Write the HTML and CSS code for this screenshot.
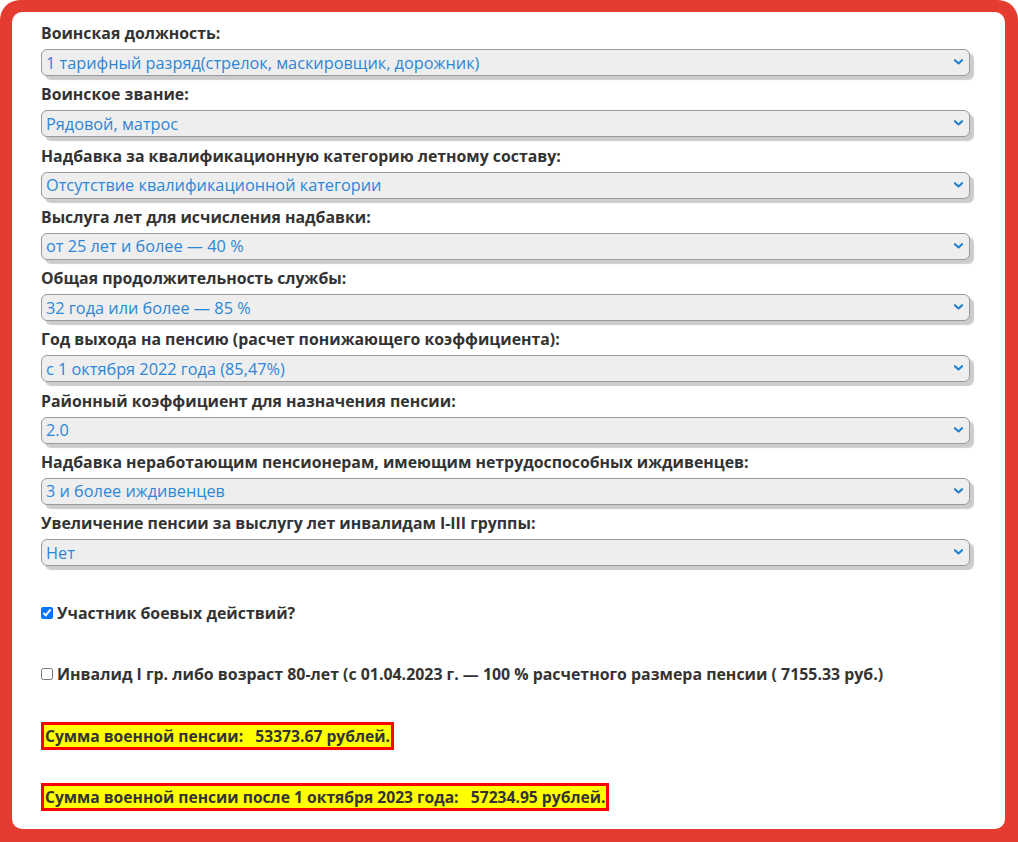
FILE: index.html
```html
<!DOCTYPE html>
<html lang="ru">
<head>
<meta charset="utf-8">
<title>Калькулятор военной пенсии</title>
<link rel="stylesheet" href="styles.css">
</head>
<body>
<div class="frame">
  <div class="card">
    <div class="field">
      <label class="lbl">Воинская должность:</label>
      <div class="sel"><select><option>1 тарифный разряд(стрелок, маскировщик, дорожник)</option></select><svg class="chev" viewBox="0 0 10 6"><path d="M1 1 L5 4.6 L9 1"/></svg></div>
    </div>
    <div class="field">
      <label class="lbl">Воинское звание:</label>
      <div class="sel"><select><option>Рядовой, матрос</option></select><svg class="chev" viewBox="0 0 10 6"><path d="M1 1 L5 4.6 L9 1"/></svg></div>
    </div>
    <div class="field">
      <label class="lbl">Надбавка за квалификационную категорию летному составу:</label>
      <div class="sel"><select><option>Отсутствие квалификационной категории</option></select><svg class="chev" viewBox="0 0 10 6"><path d="M1 1 L5 4.6 L9 1"/></svg></div>
    </div>
    <div class="field">
      <label class="lbl">Выслуга лет для исчисления надбавки:</label>
      <div class="sel"><select><option>от 25 лет и более — 40 %</option></select><svg class="chev" viewBox="0 0 10 6"><path d="M1 1 L5 4.6 L9 1"/></svg></div>
    </div>
    <div class="field">
      <label class="lbl">Общая продолжительность службы:</label>
      <div class="sel"><select><option>32 года или более — 85 %</option></select><svg class="chev" viewBox="0 0 10 6"><path d="M1 1 L5 4.6 L9 1"/></svg></div>
    </div>
    <div class="field">
      <label class="lbl">Год выхода на пенсию (расчет понижающего коэффициента):</label>
      <div class="sel"><select><option>с 1 октября 2022 года (85,47%)</option></select><svg class="chev" viewBox="0 0 10 6"><path d="M1 1 L5 4.6 L9 1"/></svg></div>
    </div>
    <div class="field">
      <label class="lbl">Районный коэффициент для назначения пенсии:</label>
      <div class="sel"><select><option>2.0</option></select><svg class="chev" viewBox="0 0 10 6"><path d="M1 1 L5 4.6 L9 1"/></svg></div>
    </div>
    <div class="field">
      <label class="lbl">Надбавка неработающим пенсионерам, имеющим нетрудоспособных иждивенцев:</label>
      <div class="sel"><select><option>3 и более иждивенцев</option></select><svg class="chev" viewBox="0 0 10 6"><path d="M1 1 L5 4.6 L9 1"/></svg></div>
    </div>
    <div class="field">
      <label class="lbl">Увеличение пенсии за выслугу лет инвалидам I-III группы:</label>
      <div class="sel"><select><option>Нет</option></select><svg class="chev" viewBox="0 0 10 6"><path d="M1 1 L5 4.6 L9 1"/></svg></div>
    </div>

    <label class="check first"><input type="checkbox" checked>Участник боевых действий?</label>
    <label class="check second"><input type="checkbox">Инвалид I гр. либо возраст 80-лет (с 01.04.2023 г. — 100 % расчетного размера пенсии ( 7155.33 руб.)</label>

    <div class="result r1">Сумма военной пенсии:&nbsp;&nbsp; 53373.67 рублей.</div>
    <div class="result r2">Сумма военной пенсии после 1 октября 2023 года:&nbsp;&nbsp; 57234.95 рублей.</div>
  </div>
</div>
</body>
</html>
```
FILE: styles.css
```css
html, body {
  margin: 0;
  padding: 0;
  background: #ffffff;
  overflow: hidden;
}
.frame {
  box-sizing: border-box;
  height: 842px;
  background: #e53c31;
  padding: 12px 13px 13px 12px;
  border-radius: 20px 20px 0 0;
}
.card {
  box-sizing: border-box;
  height: 100%;
  background: #ffffff;
  border-radius: 10px;
  padding: 11px 35px 0 29px;
  font-family: "Open Sans", "DejaVu Sans", sans-serif;
  color: #333333;
}
.field {
  margin-bottom: 8.25px;
}
.lbl {
  display: block;
  font-weight: 700;
  font-size: 15.85px;
  line-height: 20px;
  margin-bottom: 6px;
}
.sel {
  position: relative;
  height: 27px;
}
.sel select {
  -webkit-appearance: none;
  appearance: none;
  box-sizing: border-box;
  width: 100%;
  height: 27px;
  margin: 0;
  padding: 0 24px 0 4px;
  background: #eeeeee;
  border: 1px solid #9a9a9a;
  border-radius: 6px;
  box-shadow: 4px 4px 1px rgba(0, 0, 0, 0.2);
  font-family: "Open Sans", "DejaVu Sans", sans-serif;
  font-size: 16.3px;
  color: #2d86d6;
  outline: none;
}
.chev {
  position: absolute;
  right: 7px;
  top: 10px;
  width: 9px;
  height: 6px;
  fill: none;
  stroke: #1f7fd0;
  stroke-width: 2.4;
  stroke-linecap: round;
  stroke-linejoin: round;
  pointer-events: none;
}
.check {
  display: flex;
  align-items: center;
  font-weight: 700;
  font-size: 15.9px;
  line-height: 20px;
}
.check input {
  width: 12px;
  height: 12px;
  margin: 0 4px 0 0;
}
.check.first {
  margin-top: 37px;
}
.check.second {
  margin-top: 41px;
}
.result {
  display: table;
  background: #ffff00;
  border: 3px solid #ff0000;
  padding: 0 1px;
  font-weight: 700;
  font-size: 15.65px;
  line-height: 22px;
}
.r1 {
  margin-top: 38px;
}
.r2 {
  margin-top: 33px;
}
```
